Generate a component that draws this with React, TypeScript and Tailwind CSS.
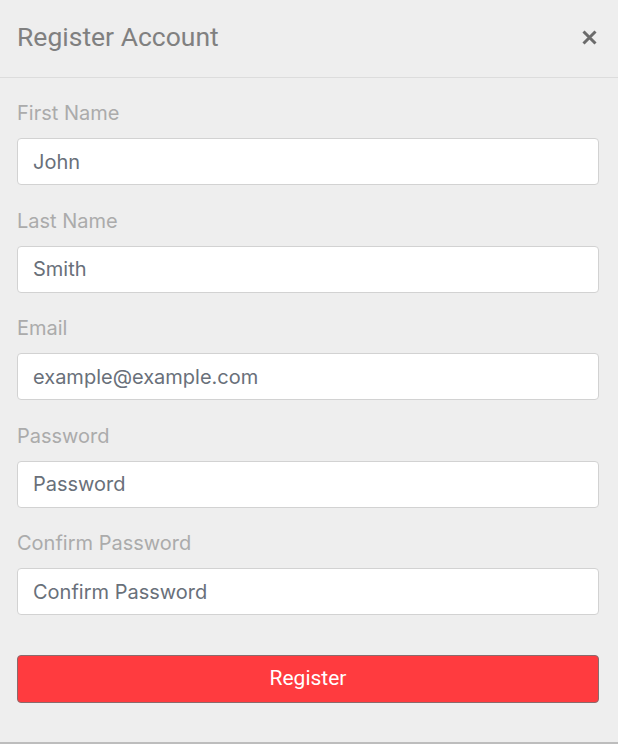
import React from "react";

const fields = [
  { label: "First Name", value: "John" },
  { label: "Last Name", value: "Smith" },
  { label: "Email", value: "example@example.com" },
  { label: "Password", value: "Password" },
  { label: "Confirm Password", value: "Confirm Password" },
];

const CloseIcon = () => (
  <svg width="17" height="17" viewBox="0 0 17 17" className="text-[#6b6b6b]">
    <path
      d="M2.5 2.5 L14.5 14.5 M14.5 2.5 L2.5 14.5"
      stroke="currentColor"
      strokeWidth="3"
    />
  </svg>
);

export default function App() {
  return (
    <div className="w-[618px] h-[744px] bg-[#eeeeee] border-b-2 border-[#bdbdbd] flex flex-col">
      <header className="h-[78px] flex items-center justify-between pl-[17px] pr-[20px] border-b border-[#dcdcdc]">
        <h1 className="[font-family:Roboto,sans-serif] text-[26.5px] text-[#808080] leading-none -mt-[2px]">
          Register Account
        </h1>
        <button className="-mt-[3px]">
          <CloseIcon />
        </button>
      </header>
      <form className="pl-[17px] pr-[19px] pt-[22px]">
        {fields.map((f) => (
          <div key={f.label} className="mb-[22.5px]">
            <label className="block h-[27px] leading-[27px] mb-[11px] [font-family:Inter,sans-serif] text-[20px] text-[#ababab]">
              {f.label}
            </label>
            <input
              type="text"
              defaultValue={f.value}
              className="w-full h-[47px] bg-white border border-[#d2d2d2] rounded-[4px] px-[15px] [font-family:Inter,sans-serif] text-[20px] text-[#69707a] outline-none"
            />
          </div>
        ))}
        <button
          type="button"
          className="mt-[17px] w-full h-[48px] rounded-[4px] bg-[#ff3b3f] border border-[#8a6a6c] text-white [font-family:Roboto,sans-serif] text-[21px]"
        >
          Register
        </button>
      </form>
    </div>
  );
}
